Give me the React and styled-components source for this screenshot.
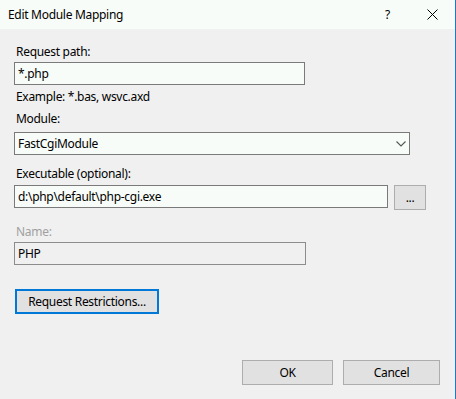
import React from 'react';
import styled, { createGlobalStyle } from 'styled-components';

const GlobalStyle = createGlobalStyle`
  html, body {
    margin: 0;
    padding: 0;
    background: #f0f0f0;
  }
  body {
    font-family: "Noto Sans", "Open Sans", sans-serif;
    font-size: 12px;
    letter-spacing: -0.3px;
    color: #000;
  }
`;

const Window = styled.div`
  width: 456px;
  height: 399px;
  box-sizing: border-box;
  border-right: 1px solid #1979ca;
  background: #f0f0f0;
  display: flex;
  flex-direction: column;
`;

const TitleBar = styled.div`
  height: 29px;
  flex: none;
  display: flex;
  align-items: center;
  background: #f7fcf8;
  padding-left: 8px;
`;

const Title = styled.span`
  flex: 1;
  font-size: 12px;
`;

const TitleButton = styled.div`
  width: 45px;
  height: 29px;
  display: flex;
  align-items: center;
  justify-content: center;
  font-size: 12px;
`;

const Content = styled.div`
  flex: 1;
  display: flex;
  flex-direction: column;
  padding: 0 0 0 14px;
`;

const Label = styled.div`
  line-height: 16px;
  height: 16px;
  padding-left: 2px;
  margin-top: ${p => p.$top || 0}px;
  color: ${p => (p.$disabled ? '#a0a0a0' : '#000')};
`;

const Row = styled.div`
  display: flex;
  align-items: flex-start;
  gap: 6px;
  margin-top: ${p => p.$top || 0}px;
`;

const TextBox = styled.div`
  box-sizing: border-box;
  width: ${p => p.$width}px;
  height: 23px;
  border: 1px solid ${p => (p.$disabled ? '#8c8c8c' : '#7a7a7a')};
  background: ${p => (p.$disabled ? '#f0f0f0' : '#f7fcf8')};
  display: flex;
  align-items: center;
  padding-left: 3px;
  white-space: nowrap;
`;

const Select = styled(TextBox)`
  justify-content: space-between;
  padding-right: 3px;
`;

const Button = styled.div`
  box-sizing: border-box;
  width: ${p => p.$width}px;
  height: 25px;
  border: ${p => (p.$focused ? '2px solid #0078d7' : '1px solid #adadad')};
  background: #e1e1e1;
  display: flex;
  align-items: center;
  justify-content: center;
  white-space: nowrap;
`;

const Footer = styled.div`
  margin-top: auto;
  display: flex;
  justify-content: flex-end;
  gap: 10px;
  padding: 0 15px 14px 0;
`;

const Chevron = () => (
  <svg width="10" height="6" viewBox="0 0 10 6">
    <path d="M0.5 0.5 L5 5 L9.5 0.5" fill="none" stroke="#555" strokeWidth="1.1" />
  </svg>
);

const CloseIcon = () => (
  <svg width="11" height="11" viewBox="0 0 11 11">
    <path d="M0.5 0.5 L10.5 10.5 M10.5 0.5 L0.5 10.5" stroke="#000" strokeWidth="1" />
  </svg>
);

export default function App() {
  return (
    <>
      <GlobalStyle />
      <Window>
        <TitleBar>
          <Title>Edit Module Mapping</Title>
          <TitleButton>?</TitleButton>
          <TitleButton>
            <CloseIcon />
          </TitleButton>
        </TitleBar>
        <Content>
          <Label $top={15}>Request path:</Label>
          <Row $top={2}>
            <TextBox $width={291}>*.php</TextBox>
          </Row>
          <Label $top={4}>Example: *.bas, wsvc.axd</Label>
          <Label $top={6}>Module:</Label>
          <Row $top={5}>
            <Select $width={396}>
              FastCgiModule
              <Chevron />
            </Select>
          </Row>
          <Label $top={11}>Executable (optional):</Label>
          <Row $top={3}>
            <TextBox $width={374}>d:\php\default\php-cgi.exe</TextBox>
            <Button $width={32}>...</Button>
          </Row>
          <Label $top={14} $disabled>Name:</Label>
          <Row $top={2}>
            <TextBox $width={292} $disabled>PHP</TextBox>
          </Row>
          <Row $top={24}>
            <Button $width={144} $focused style={{ marginLeft: 1 }}>Request Restrictions...</Button>
          </Row>
          <Footer>
            <Button $width={91}>OK</Button>
            <Button $width={97}>Cancel</Button>
          </Footer>
        </Content>
      </Window>
    </>
  );
}
